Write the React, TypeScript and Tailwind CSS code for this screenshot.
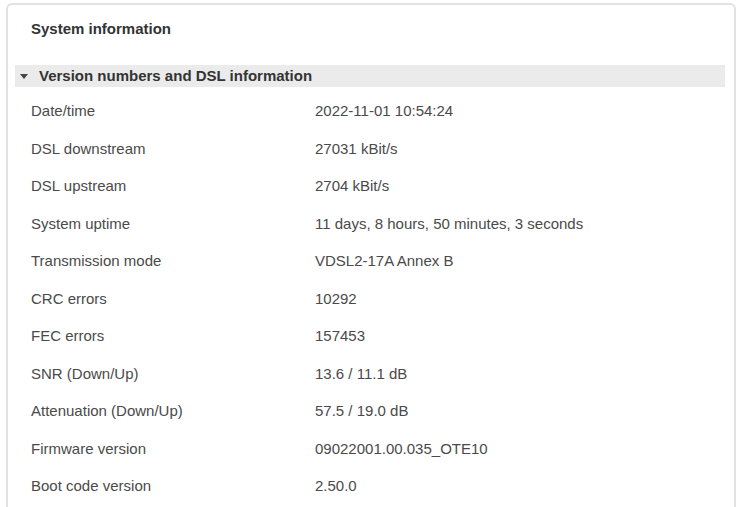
const rows: [string, string][] = [
  ["Date/time", "2022-11-01 10:54:24"],
  ["DSL downstream", "27031 kBit/s"],
  ["DSL upstream", "2704 kBit/s"],
  ["System uptime", "11 days, 8 hours, 50 minutes, 3 seconds"],
  ["Transmission mode", "VDSL2-17A Annex B"],
  ["CRC errors", "10292"],
  ["FEC errors", "157453"],
  ["SNR (Down/Up)", "13.6 / 11.1 dB"],
  ["Attenuation (Down/Up)", "57.5 / 19.0 dB"],
  ["Firmware version", "09022001.00.035_OTE10"],
  ["Boot code version", "2.50.0"],
];

export default function App() {
  return (
    <div className="h-[507px] w-[738px] overflow-hidden bg-white pl-[6px] pr-[2px] pt-[3px] font-['Liberation_Sans',Arial,sans-serif]">
      <div className="h-[560px] rounded-md border-2 border-[#e2e2e2] bg-white pl-[7px] pr-[9px] pt-[14px]">
        <div className="h-[46px] pl-4 text-[15px] font-bold leading-5 text-[#333]">
          System information
        </div>
        <div className="flex h-[22px] items-center bg-[#ebebeb] pl-[5px] text-[15px] font-bold text-[#333]">
          <svg width="8" height="5" viewBox="0 0 8 5" className="mr-[11px]">
            <path d="M0 0 L8 0 L4 5 Z" fill="#444" />
          </svg>
          Version numbers and DSL information
        </div>
        <div className="pt-[5.5px]">
          {rows.map(([label, value]) => (
            <div
              key={label}
              className="flex h-[37.5px] items-center text-[15px] text-[#4a4a4a]"
            >
              <div className="w-[300px] pl-4">{label}</div>
              <div>{value}</div>
            </div>
          ))}
        </div>
      </div>
    </div>
  );
}
